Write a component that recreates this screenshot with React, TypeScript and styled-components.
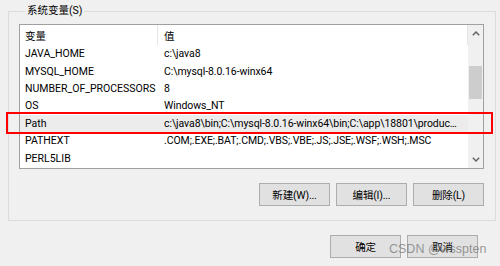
import React from "react";
import styled, { createGlobalStyle } from "styled-components";

const GlobalStyle = createGlobalStyle`
  html, body {
    margin: 0;
    padding: 0;
    background: #f0f0f0;
  }
`;

const uiFont = `Roboto, "Noto Sans CJK SC", sans-serif`;

interface EnvVar {
  name: string;
  value: string;
}

const variables: EnvVar[] = [
  { name: "JAVA_HOME", value: "c:\\java8" },
  { name: "MYSQL_HOME", value: "C:\\mysql-8.0.16-winx64" },
  { name: "NUMBER_OF_PROCESSORS", value: "8" },
  { name: "OS", value: "Windows_NT" },
  {
    name: "Path",
    value: "c:\\java8\\bin;C:\\mysql-8.0.16-winx64\\bin;C:\\app\\18801\\product\\11.2.0\\dbhome_1\\bin",
  },
  { name: "PATHEXT", value: ".COM;.EXE;.BAT;.CMD;.VBS;.VBE;.JS;.JSE;.WSF;.WSH;.MSC" },
  { name: "PERL5LIB", value: "" },
];

const Window = styled.div`
  position: relative;
  width: 500px;
  height: 266px;
  overflow: hidden;
  background: #f0f0f0;
  font-family: ${uiFont};
  font-size: 11px;
  color: #000;
  display: flex;
  flex-direction: column;
  align-items: flex-end;
`;

const Group = styled.fieldset`
  box-sizing: border-box;
  align-self: flex-start;
  width: 488px;
  height: 217px;
  margin: 4px 0 0 8px;
  padding: 6px 11px 13px 10px;
  border: 1px solid #dcdcdc;
  display: flex;
  flex-direction: column;
  min-width: 0;
`;

const Legend = styled.legend`
  margin-left: 6px;
  padding: 0 2px;
  font-size: 10.5px;
  line-height: 14px;
`;

const ListBox = styled.div`
  box-sizing: border-box;
  width: 465px;
  height: 145px;
  border: 1px solid #a0a0a0;
  background: #fff;
  display: flex;
`;

const Table = styled.div`
  flex: 1;
  min-width: 0;
  display: flex;
  flex-direction: column;
`;

const HeaderRow = styled.div`
  display: grid;
  grid-template-columns: 137px 1fr;
  height: 20px;
  align-items: center;
  font-size: 10.5px;
`;

const HeaderCell = styled.div<{ $divider?: boolean }>`
  height: 100%;
  display: flex;
  align-items: center;
  padding-left: ${({ $divider }) => ($divider ? "6px" : "5px")};
  border-left: ${({ $divider }) => ($divider ? "1px solid #e5e5e5" : "none")};
  border-right: ${({ $divider }) => ($divider ? "1px solid #e5e5e5" : "none")};
`;

const Row = styled.div<{ $selected?: boolean }>`
  display: grid;
  grid-template-columns: 137px 1fr;
  height: 17.4px;
  align-items: center;
  background: ${({ $selected }) => ($selected ? "#ececec" : "transparent")};
`;

const Cell = styled.div<{ $value?: boolean }>`
  padding-left: ${({ $value }) => ($value ? "7px" : "5px")};
  padding-right: ${({ $value }) => ($value ? "8px" : "0")};
  font-size: 10.5px;
  letter-spacing: ${({ $value }) => ($value ? "-0.08px" : "0")};
  white-space: nowrap;
  overflow: hidden;
  text-overflow: ${({ $value }) => ($value ? "ellipsis" : "clip")};
  line-height: 17px;
`;

const ScrollBar = styled.div`
  width: 15px;
  background: #f0f0f0;
  display: flex;
  flex-direction: column;
  align-items: center;
`;

const ScrollArrow = styled.div`
  height: 17px;
  width: 100%;
  display: flex;
  align-items: center;
  justify-content: center;
`;

const ScrollTrack = styled.div`
  flex: 1;
  width: 100%;
  display: flex;
  flex-direction: column;
  padding-top: 24px;
`;

const Thumb = styled.div`
  width: 13px;
  height: 33px;
  margin-left: 1px;
  background: #cdcdcd;
`;

const ButtonRow = styled.div`
  display: flex;
  justify-content: flex-end;
  gap: 6px;
  margin-top: 14px;
`;

const BottomRow = styled.div`
  display: flex;
  gap: 6px;
  margin: 14px 22px 0 0;
`;

const Button = styled.button`
  box-sizing: border-box;
  width: 71px;
  height: 23px;
  padding: 0;
  background: #e1e1e1;
  border: 1px solid #adadad;
  font-family: ${uiFont};
  font-size: 10.5px;
  letter-spacing: -0.2px;
  color: #000;
`;

const Highlight = styled.div`
  position: absolute;
  left: 6px;
  top: 112px;
  width: 487px;
  height: 22px;
  box-sizing: border-box;
  border: 2px solid #f00;
  pointer-events: none;
`;

const Watermark = styled.div`
  position: absolute;
  left: 389px;
  top: 242px;
  font-family: "Liberation Sans", Arial, sans-serif;
  font-size: 12.5px;
  color: rgba(120, 120, 120, 0.75);
  pointer-events: none;
`;

const Chevron: React.FC<{ up?: boolean }> = ({ up }) => (
  <svg width="8" height="5" viewBox="0 0 8 5">
    <path
      d={up ? "M0.8 4.2 L4 1 L7.2 4.2" : "M0.8 0.8 L4 4 L7.2 0.8"}
      fill="none"
      stroke="#606060"
      strokeWidth="1.4"
    />
  </svg>
);

const App: React.FC = () => {
  return (
    <Window>
      <GlobalStyle />
      <Group>
        <Legend>系统变量(S)</Legend>
        <ListBox>
          <Table>
            <HeaderRow>
              <HeaderCell>变量</HeaderCell>
              <HeaderCell $divider>值</HeaderCell>
            </HeaderRow>
            {variables.map((v) => (
              <Row key={v.name} $selected={v.name === "Path"}>
                <Cell>{v.name}</Cell>
                <Cell $value>{v.value}</Cell>
              </Row>
            ))}
          </Table>
          <ScrollBar>
            <ScrollArrow>
              <Chevron up />
            </ScrollArrow>
            <ScrollTrack>
              <Thumb />
            </ScrollTrack>
            <ScrollArrow>
              <Chevron />
            </ScrollArrow>
          </ScrollBar>
        </ListBox>
        <ButtonRow>
          <Button>新建(W)...</Button>
          <Button>编辑(I)...</Button>
          <Button>删除(L)</Button>
        </ButtonRow>
      </Group>
      <BottomRow>
        <Button>确定</Button>
        <Button>取消</Button>
      </BottomRow>
      <Highlight />
      <Watermark>CSDN @wsspten</Watermark>
    </Window>
  );
};

export default App;
